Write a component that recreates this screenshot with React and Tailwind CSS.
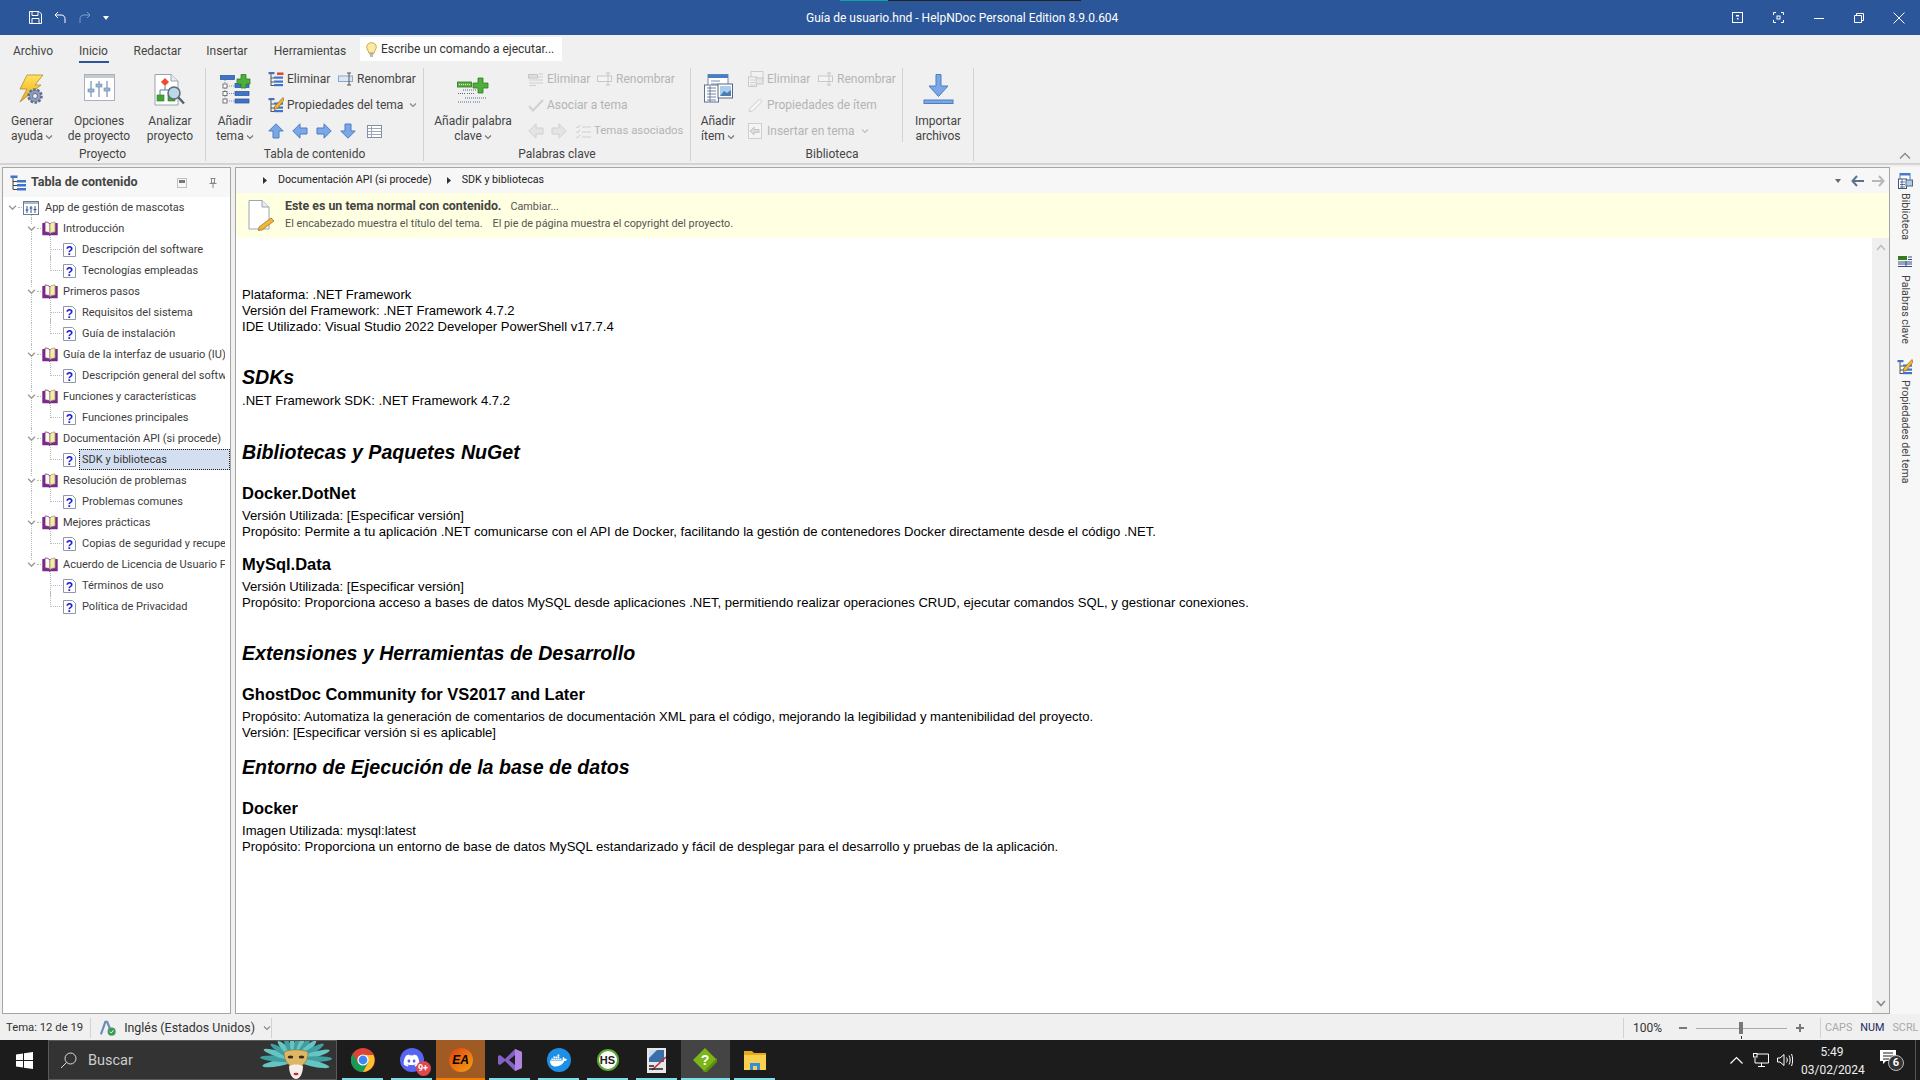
import { FaDiscord, FaDocker } from 'react-icons/fa';

const TREE = [
  { level: 0, label: 'App de gestión de mascotas' },
  { level: 1, label: 'Introducción' },
  { level: 2, label: 'Descripción del software' },
  { level: 2, label: 'Tecnologías empleadas', last: true },
  { level: 1, label: 'Primeros pasos' },
  { level: 2, label: 'Requisitos del sistema' },
  { level: 2, label: 'Guía de instalación', last: true },
  { level: 1, label: 'Guía de la interfaz de usuario (IU)' },
  { level: 2, label: 'Descripción general del software', last: true },
  { level: 1, label: 'Funciones y características' },
  { level: 2, label: 'Funciones principales', last: true },
  { level: 1, label: 'Documentación API (si procede)' },
  { level: 2, label: 'SDK y bibliotecas', last: true, selected: true },
  { level: 1, label: 'Resolución de problemas' },
  { level: 2, label: 'Problemas comunes', last: true },
  { level: 1, label: 'Mejores prácticas' },
  { level: 2, label: 'Copias de seguridad y recuperación', last: true },
  { level: 1, label: 'Acuerdo de Licencia de Usuario Final', lastBook: true },
  { level: 2, label: 'Términos de uso', inLast: true },
  { level: 2, label: 'Política de Privacidad', last: true, inLast: true },
];

function Chevron({ className = 'text-[#777]', size = 8 }) {
  return (
    <svg width={size} height={size} viewBox="0 0 8 8" className={className}>
      <path d="M1 2.5 4 5.5 7 2.5" fill="none" stroke="currentColor" strokeWidth="1.2" />
    </svg>
  );
}

function Arrow({ dir = 'up', disabled, size = 16 }) {
  const rot = { up: 0, right: 90, down: 180, left: 270 }[dir];
  return (
    <svg width={size} height={size} viewBox="0 0 16 16">
      <path
        transform={`rotate(${rot} 8 8)`}
        d="M8 .8 15.2 8H11v7H5V8H.8Z"
        fill={disabled ? '#e4e4e4' : '#7ba7e6'}
        stroke={disabled ? '#d0d0d0' : '#4a7fc4'}
      />
    </svg>
  );
}

function BoltGearIcon() {
  return (
    <svg width="26" height="31" viewBox="0 0 26 31">
      <defs>
        <linearGradient id="bolt" x1="0" y1="0" x2="0" y2="1">
          <stop offset="0" stopColor="#ffe35c" />
          <stop offset="1" stopColor="#f0a818" />
        </linearGradient>
      </defs>
      <path d="M8 1H24L16 11H22L1 28 8 15H1Z" fill="url(#bolt)" stroke="#b08a30" strokeWidth=".8" />
      <circle cx="16" cy="22" r="6.5" fill="#8d9db8" stroke="#5f6f8c" strokeWidth="2.5" strokeDasharray="2.5 1.5" />
      <circle cx="16" cy="22" r="2.5" fill="#f0f0f0" stroke="#5f6f8c" />
    </svg>
  );
}

function SlidersWindowIcon() {
  return (
    <svg width="31" height="27" viewBox="0 0 31 27">
      <rect x=".5" y=".5" width="30" height="26" fill="#fff" stroke="#a9b0bc" />
      <rect x="1" y="1" width="29" height="3" fill="#c4c9d2" />
      <g stroke="#8ba0bd" strokeWidth="1.4">
        <path d="M7 7V23M15 7V23M23 7V23" />
      </g>
      <g fill="#9db4d2" stroke="#6c86a8" strokeWidth=".6">
        <rect x="4" y="15" width="6" height="3" />
        <rect x="12" y="10" width="6" height="3" />
        <rect x="20" y="14" width="6" height="3" />
      </g>
    </svg>
  );
}

function AnalyzeIcon() {
  return (
    <svg width="32" height="33" viewBox="0 0 32 33">
      <path d="M1 .5H17L24 7V31H1Z" fill="#fff" stroke="#9aa3ad" />
      <path d="M17 .5V7H24" fill="#e8edf3" stroke="#9aa3ad" />
      <path d="M11 4 15 8 11 12 7 8Z" fill="#ef4b2b" />
      <path d="M11 12V16M6 21V16H16V21" fill="none" stroke="#5f7d9d" />
      <rect x="3" y="21" width="7" height="6" fill="#3fa535" stroke="#2a7a22" strokeWidth=".6" />
      <rect x="14" y="21" width="7" height="6" fill="#3fa535" stroke="#2a7a22" strokeWidth=".6" />
      <circle cx="20" cy="19" r="6" fill="#bcd6ea" stroke="#5d6a78" strokeWidth="1.5" />
      <path d="M24.5 23.5 30 29.5" stroke="#59606a" strokeWidth="2.4" />
    </svg>
  );
}

function AddTopicIcon() {
  return (
    <svg width="31" height="31" viewBox="0 0 31 31">
      <rect x=".5" y="1.5" width="14" height="4" fill="#3f74c8" stroke="#264f96" strokeWidth=".7" />
      <path d="M5 6V27M5 12H14M5 19.5H14M5 27H14" fill="none" stroke="#8a8a8a" strokeDasharray="1 1" />
      <g fill="#fff" stroke="#777">
        <rect x="3" y="10" width="4" height="4" />
        <rect x="3" y="17.5" width="4" height="4" />
        <rect x="3" y="25" width="4" height="4" />
      </g>
      <g fill="#3f74c8" stroke="#264f96" strokeWidth=".7">
        <rect x="15" y="9.5" width="14" height="4" />
        <rect x="15" y="17.5" width="14" height="4" />
        <rect x="15" y="25" width="14" height="4" />
      </g>
      <path d="M21 .5H26V5H30V10H26V14H21V10H17V5H21Z" fill="#4fae3c" stroke="#2c7d20" strokeWidth=".8" />
    </svg>
  );
}

function TocIcon({ variant }) {
  return (
    <svg width="16" height="16" viewBox="0 0 16 16">
      <rect x=".5" y="1" width="6" height="2.2" fill="#3f74c8" />
      <path d="M3 3V15M3 7H6M3 11H6M3 14.5H6" stroke="#555" fill="none" />
      <g fill="#3f74c8">
        <rect x="6" y="5.5" width="9" height="2.2" />
        <rect x="6" y="9.5" width="9" height="2.2" />
        <rect x="6" y="13" width="9" height="2.2" />
      </g>
      {variant === 'delete' && <rect x="9" y="1.5" width="6.5" height="2.4" fill="#e0402c" />}
      {variant === 'edit' && (
        <path d="M15 .5 7 9 6 12.5 9.5 11.5 16 3Z" fill="#f2b632" stroke="#8a5a1a" strokeWidth=".6" />
      )}
    </svg>
  );
}

function RenameIcon({ disabled }) {
  const c = disabled ? '#c4c4c4' : '#555';
  return (
    <svg width="16" height="14" viewBox="0 0 16 14">
      <rect x=".5" y="4" width="14" height="5.5" fill={disabled ? '#f4f4f4' : '#dce7f5'} stroke={disabled ? '#c8c8c8' : '#8aa6cf'} />
      <path d="M9 1H13M11 1V13M9 13H13" fill="none" stroke={c} />
    </svg>
  );
}

function GridListIcon() {
  return (
    <svg width="15" height="13" viewBox="0 0 15 13">
      <rect x=".5" y=".5" width="14" height="12" fill="#fff" stroke="#7f8ea3" />
      <path d="M.5 3.5H14.5M.5 6.5H14.5M.5 9.5H14.5M4.5 .5V12.5" stroke="#9aa7ba" fill="none" />
    </svg>
  );
}

function AddKeywordIcon() {
  return (
    <svg width="32" height="31" viewBox="0 0 32 31">
      <rect x=".5" y="8" width="14" height="5" fill="#5fae3e" stroke="#2d7520" strokeWidth=".8" />
      <path d="M2 10.5H13" stroke="#d5f0c8" strokeDasharray="1 1" />
      <path d="M21 4H26V9H31V14H26V19H21V14H16V9H21Z" fill="#4fae3c" stroke="#2c7d20" strokeWidth=".8" />
      <g stroke="#55698c" strokeDasharray="1 1" fill="none">
        <path d="M6 16H20M1 19.5H8M10 19.5H17M8 24H29M1 28H14M16 28H24" />
      </g>
    </svg>
  );
}

function KeywordSmallIcon() {
  return (
    <svg width="16" height="14" viewBox="0 0 16 14">
      <rect x=".5" y="2.5" width="9" height="3.5" fill="#dedede" stroke="#c6c6c6" />
      <path d="M11 2H15M10 5H15M1 8H15M1 11H15M1 13.5H8" stroke="#cfcfcf" />
    </svg>
  );
}

function CheckIcon() {
  return (
    <svg width="16" height="13" viewBox="0 0 16 13">
      <path d="M1 7 5 11.5 15 1" fill="none" stroke="#d0d0d0" strokeWidth="2" />
    </svg>
  );
}

function CheckListIcon() {
  return (
    <svg width="16" height="15" viewBox="0 0 16 15">
      <path d="M1 2.5 2.5 4 5 1M1 7.5 2.5 9 5 6M1 12.5 2.5 14 5 11" fill="none" stroke="#c8c8c8" />
      <path d="M7 3H16M7 8H16M7 13H16" stroke="#cfcfcf" />
    </svg>
  );
}

function AddItemIcon() {
  return (
    <svg width="29" height="29" viewBox="0 0 29 29">
      <rect x="4" y=".5" width="20" height="18" fill="#fff" stroke="#7b8da8" />
      <rect x="4" y=".5" width="20" height="3.5" fill="#4a7cc7" />
      <path d="M7 7H16M7 10H14" stroke="#7b8da8" />
      <rect x=".5" y="11" width="14" height="17" fill="#fff" stroke="#5d6f8c" />
      <path d="M3 14H12M3 17H12M3 20H12M3 23H12M3 26H12M6 12V28" stroke="#4f6690" strokeWidth=".8" />
      <rect x="14" y="10" width="14.5" height="14" fill="#fff" stroke="#58677f" />
      <rect x="16" y="12" width="11" height="10" fill="#a9cdee" />
      <path d="M16 22 20 17 23 19 27 16V22Z" fill="#4f7cb0" />
    </svg>
  );
}

function ItemSmallIcon() {
  return (
    <svg width="16" height="16" viewBox="0 0 16 16">
      <rect x="3" y=".5" width="12" height="9" fill="#f2f2f2" stroke="#cccccc" />
      <rect x=".5" y="6" width="8" height="9.5" fill="#f5f5f5" stroke="#c8c8c8" />
      <rect x="8" y="7" width="7" height="6" fill="#e6e6e6" stroke="#c8c8c8" />
      <path d="M2 9H7M2 11.5H7M2 14H7" stroke="#cdcdcd" />
    </svg>
  );
}

function PencilIcon() {
  return (
    <svg width="15" height="15" viewBox="0 0 15 15">
      <path d="M11.5 1 14 3.5 4.5 13 1 14 2 10.5Z" fill="#f6f6f6" stroke="#cccccc" />
    </svg>
  );
}

function InsertIcon() {
  return (
    <svg width="14" height="16" viewBox="0 0 14 16">
      <rect x=".5" y=".5" width="13" height="15" fill="#f4f4f4" stroke="#cfcfcf" />
      <path d="M2 8 6 4V6.5H11V9.5H6V12Z" fill="#dcdcdc" stroke="#c4c4c4" />
    </svg>
  );
}

function ImportIcon() {
  return (
    <svg width="31" height="31" viewBox="0 0 31 31">
      <path d="M13 .5H18V12H25L15.5 22.5 6 12H13Z" fill="#7ba7e6" stroke="#4a7fc4" />
      <rect x="1" y="26" width="29" height="3.5" fill="#7ba7e6" stroke="#4a7fc4" />
    </svg>
  );
}

function BookIcon() {
  return (
    <svg width="16" height="15" viewBox="0 0 16 15">
      <path d="M1 2V13.5H7L8 14.5 9 13.5H15V2" fill="#7a2a8c" stroke="#7a2a8c" strokeWidth="1.4" />
      <path d="M3 1C5 1 7 1.6 8 3V12.5C7 11.5 5 11 3 11Z" fill="#fdfbe6" stroke="#7a2a8c" strokeWidth=".8" />
      <path d="M13 1C11 1 9 1.6 8 3V12.5C9 11.5 11 11 13 11Z" fill="#f7ecaa" stroke="#9c9a6a" strokeWidth=".8" />
    </svg>
  );
}

function HelpPageIcon() {
  return (
    <svg width="13" height="14" viewBox="0 0 13 14">
      <path d="M.5.5H9.5L12.5 3.5V13.5H.5Z" fill="#fff" stroke="#8d99a6" />
      <text x="6.5" y="11.5" textAnchor="middle" fontSize="12" fontWeight="700" fontFamily="Liberation Sans" fill="#1a1ae0">?</text>
    </svg>
  );
}

function ProjectIcon() {
  return (
    <svg width="16" height="14" viewBox="0 0 16 14">
      <rect x=".5" y=".5" width="15" height="13" fill="#fff" stroke="#6b7d94" />
      <rect x="1" y="1" width="14" height="2" fill="#aeb9c8" />
      <path d="M4 5V12M8 5V12M12 5V12" stroke="#27558f" />
      <path d="M2.5 9H5.5M6.5 7H9.5M10.5 8.5H13.5" stroke="#27558f" />
    </svg>
  );
}

function TreeRow({ row }) {
  const left = { 0: 'pl-[20px]', 1: 'pl-[39px]', 2: 'pl-[60px]' }[row.level];
  return (
    <div className={`relative h-[21px] flex items-center whitespace-nowrap ${left} ${row.selected ? '' : 'pr-[4px]'}`}>
      {row.level === 0 && (
        <>
          <span className="absolute left-[5px] top-[6px]"><Chevron size={9} className="text-[#999]" /></span>
          <span className="absolute left-[15px] top-[10px] w-[4px] border-t border-dotted border-[#bbb]" />
          <span className="absolute left-[28px] top-[14px] h-[7px] border-l border-dotted border-[#bbb]" />
        </>
      )}
      {row.level === 1 && (
        <>
          {!row.lastBook && <span className="absolute left-[28px] top-[14px] h-[7px] border-l border-dotted border-[#bbb]" />}
          <span className="absolute left-[28px] top-0 h-[6px] border-l border-dotted border-[#bbb]" />
          <span className="absolute left-[24px] top-[6px]"><Chevron size={9} className="text-[#999]" /></span>
          <span className="absolute left-[34px] top-[10px] w-[4px] border-t border-dotted border-[#bbb]" />
        </>
      )}
      {row.level === 2 && (
        <>
          {!row.inLast && <span className="absolute left-[28px] top-0 h-[21px] border-l border-dotted border-[#bbb]" />}
          <span className={`absolute left-[47px] -top-[4px] border-l border-dotted border-[#bbb] ${row.last ? 'h-[15px]' : 'h-[25px]'}`} />
          <span className="absolute left-[47px] top-[10px] w-[12px] border-t border-dotted border-[#bbb]" />
        </>
      )}
      <span className="relative flex items-center shrink-0">
        {row.level === 0 && <ProjectIcon />}
        {row.level === 1 && <BookIcon />}
        {row.level === 2 && <HelpPageIcon />}
      </span>
      <span
        className={`pl-[2px] h-[21px] leading-[20px] overflow-hidden text-[#3c3c3c] ${row.level === 1 ? 'ml-[2px]' : 'ml-[3px]'} ${row.selected ? 'w-[151px] shrink-0 bg-[#d3dff0] border border-dotted border-[#222] text-[#333]' : 'flex-1 min-w-0 border border-transparent'}`}
      >
        {row.label}
      </span>
    </div>
  );
}

function LargeButton({ width, icon, lines, caret }) {
  return (
    <div className={`shrink-0 flex flex-col items-center ${width}`}>
      <div className="h-[46px] pt-[6px] flex items-start justify-center">{icon}</div>
      <div className="leading-[15px] text-center text-[#444] whitespace-nowrap">
        <div>{lines[0]}</div>
        <div className="flex items-center justify-center gap-[2px]">
          {lines[1]}
          {caret && <Chevron />}
        </div>
      </div>
    </div>
  );
}

function SmallAction({ icon, label, disabled, width, caret }) {
  return (
    <div className={`h-[22px] flex items-center whitespace-nowrap ${width} ${disabled ? 'text-[#b4b4b4]' : 'text-[#444]'}`}>
      <span className="w-[19px] shrink-0 flex items-center">{icon}</span>
      <span>{label}</span>
      {caret && <span className="ml-[6px]"><Chevron className={disabled ? 'text-[#c0c0c0]' : 'text-[#888]'} /></span>}
    </div>
  );
}

function RibbonGroup({ width, label, children }) {
  return (
    <div className={`shrink-0 h-[93px] flex flex-col border-r border-[#d2d2d2] ${width}`}>
      <div className="h-[79px] flex">{children}</div>
      <div className="h-[14px] leading-[14px] text-center text-[#444]">{label}</div>
    </div>
  );
}

function Ribbon() {
  return (
    <div className="h-[102px] shrink-0 bg-[#f0f0f0] border-b-2 border-[#d4d4d4] pt-[5px] flex text-[12px] relative">
      <RibbonGroup width="w-[206px]" label="Proyecto">
        <div className="pl-[6px] flex">
          <LargeButton width="w-[52px]" icon={<BoltGearIcon />} lines={['Generar', 'ayuda']} caret />
          <LargeButton width="w-[78px] ml-[2px]" icon={<SlidersWindowIcon />} lines={['Opciones', 'de proyecto']} />
          <LargeButton width="w-[62px] ml-[1px]" icon={<AnalyzeIcon />} lines={['Analizar', 'proyecto']} />
        </div>
      </RibbonGroup>
      <RibbonGroup width="w-[218px]" label="Tabla de contenido">
        <div className="pl-[4px] flex">
          <LargeButton width="w-[50px]" icon={<AddTopicIcon />} lines={['Añadir', 'tema']} caret />
          <div className="ml-[8px] flex flex-col gap-[4px]">
            <div className="flex">
              <SmallAction width="w-[70px]" icon={<TocIcon variant="delete" />} label="Eliminar" />
              <SmallAction icon={<RenameIcon />} label="Renombrar" />
            </div>
            <SmallAction icon={<TocIcon variant="edit" />} label="Propiedades del tema" caret />
            <div className="h-[22px] flex items-center gap-[8px]">
              <Arrow dir="up" />
              <Arrow dir="left" />
              <Arrow dir="right" />
              <Arrow dir="down" />
              <span className="ml-[3px]"><GridListIcon /></span>
            </div>
          </div>
        </div>
      </RibbonGroup>
      <RibbonGroup width="w-[267px]" label="Palabras clave">
        <div className="pl-[9px] flex">
          <LargeButton width="w-[80px]" icon={<AddKeywordIcon />} lines={['Añadir palabra', 'clave']} caret />
          <div className="ml-[15px] flex flex-col gap-[4px]">
            <div className="flex">
              <SmallAction width="w-[69px]" disabled icon={<KeywordSmallIcon />} label="Eliminar" />
              <SmallAction disabled icon={<RenameIcon disabled />} label="Renombrar" />
            </div>
            <SmallAction disabled icon={<CheckIcon />} label="Asociar a tema" />
            <div className="h-[22px] flex items-center text-[#b4b4b4] text-[11.4px] whitespace-nowrap">
              <Arrow dir="left" disabled />
              <span className="ml-[7px]"><Arrow dir="right" disabled /></span>
              <span className="ml-[8px] mr-[3px]"><CheckListIcon /></span>
              Temas asociados
            </div>
          </div>
        </div>
      </RibbonGroup>
      <RibbonGroup width="w-[283px]" label="Biblioteca">
        <div className="pl-[5px] flex">
          <LargeButton width="w-[44px]" icon={<AddItemIcon />} lines={['Añadir', 'ítem']} caret />
          <div className="ml-[8px] w-[155px] h-[74px] border-r border-[#d2d2d2] flex flex-col gap-[4px]">
            <div className="flex">
              <SmallAction width="w-[70px]" disabled icon={<ItemSmallIcon />} label="Eliminar" />
              <SmallAction disabled icon={<RenameIcon disabled />} label="Renombrar" />
            </div>
            <SmallAction disabled icon={<PencilIcon />} label="Propiedades de ítem" />
            <SmallAction disabled icon={<InsertIcon />} label="Insertar en tema" caret />
          </div>
          <LargeButton width="w-[60px] ml-[5px]" icon={<ImportIcon />} lines={['Importar', 'archivos']} />
        </div>
      </RibbonGroup>
      <span className="absolute right-[9px] bottom-[3px]">
        <svg width="12" height="8" viewBox="0 0 12 8"><path d="M1 6.5 6 1.5 11 6.5" fill="none" stroke="#888" strokeWidth="1.3" /></svg>
      </span>
    </div>
  );
}

function TitleBar() {
  return (
    <div className="relative h-[35px] shrink-0 bg-[#2b579a] flex items-center text-white text-[12px]">
      <span className="absolute left-[840px] top-0 w-[48px] h-[1px] bg-[#0aa5a5]" />
      <span className="absolute left-[888px] top-0 w-[193px] h-[1px] bg-[#222]" />
      <div className="w-[806px] pl-[29px] flex items-center shrink-0">
        <svg width="13" height="13" viewBox="0 0 13 13"><path d="M.5.5H10L12.5 3V12.5H.5ZM3 .5V4.5H9V.5M3 12.5V7.5H10V12.5" fill="none" stroke="#fff" /></svg>
        <svg className="ml-[12px]" width="12" height="13" viewBox="0 0 12 13"><path d="M4 1 1 4 4 7M1 4H7C10 4 11 6 11 8V12" fill="none" stroke="#fff" /></svg>
        <svg className="ml-[13px]" width="12" height="13" viewBox="0 0 12 13"><path d="M8 1 11 4 8 7M11 4H5C2 4 1 6 1 8V12" fill="none" stroke="#7f9cc6" /></svg>
        <svg className="ml-[12px]" width="6" height="4" viewBox="0 0 6 4"><path d="M0 0H6L3 4Z" fill="#fff" /></svg>
      </div>
      <div className="flex-1 whitespace-nowrap">Guía de usuario.hnd - HelpNDoc Personal Edition 8.9.0.604</div>
      <div className="flex items-center shrink-0">
        <svg width="11" height="11" viewBox="0 0 11 11"><rect x=".5" y=".5" width="10" height="10" fill="none" stroke="#fff" /><rect x="4" y="3" width="3" height="1.5" fill="#fff" /><rect x="5" y="6" width="1.5" height="1.5" fill="#fff" /></svg>
        <svg className="ml-[30px]" width="11" height="11" viewBox="0 0 11 11"><path d="M.5 3V.5H3M8 .5H10.5V3M10.5 8V10.5H8M3 10.5H.5V8" fill="none" stroke="#fff" /><rect x="4" y="4" width="3" height="3" fill="none" stroke="#fff" /></svg>
        <svg className="ml-[30px]" width="10" height="10" viewBox="0 0 10 10"><path d="M0 5.5H10" stroke="#fff" /></svg>
        <svg className="ml-[30px]" width="10" height="10" viewBox="0 0 10 10"><path d="M2.5 2.5V.5H9.5V7.5H7.5M.5 2.5H7.5V9.5H.5Z" fill="none" stroke="#fff" /></svg>
        <svg className="ml-[29px] mr-[15px]" width="12" height="12" viewBox="0 0 12 12"><path d="M.5.5 11.5 11.5M11.5.5.5 11.5" stroke="#fff" /></svg>
      </div>
    </div>
  );
}

function Tabs() {
  const tabs = [
    ['Archivo', 'w-[66px]'],
    ['Inicio', 'w-[55px]'],
    ['Redactar', 'w-[73px]'],
    ['Insertar', 'w-[66px]'],
    ['Herramientas', 'w-[100px]'],
  ];
  return (
    <div className="h-[28px] shrink-0 bg-[#f0f0f0] flex text-[12px] text-[#444]">
      {tabs.map(([name, w]) => (
        <div key={name} className={`relative text-center leading-[32px] ${w}`}>
          {name}
          {name === 'Inicio' && <span className="absolute left-[13px] right-[12px] bottom-0 h-[2px] bg-[#2b579a]" />}
        </div>
      ))}
      <div className="mt-[2px] h-[24px] w-[202px] bg-white flex items-center pl-[6px] text-[#333] whitespace-nowrap">
        <svg className="mr-[4px]" width="11" height="15" viewBox="0 0 11 15">
          <path d="M5.5.7C2.7.7.7 2.7.7 5.2c0 2.2 1.9 3.2 2.1 5.8h5.4c.2-2.6 2.1-3.6 2.1-5.8C10.3 2.7 8.3.7 5.5.7Z" fill="#fbe9a6" stroke="#d4a63c" />
          <path d="M3.5 12H7.5M4 14H7" stroke="#777" />
        </svg>
        Escribe un comando a ejecutar...
      </div>
    </div>
  );
}

function TreePanel() {
  return (
    <div className="w-[229px] shrink-0 border border-[#a5a5a5] bg-white flex flex-col text-[11px]">
      <div className="h-[29px] shrink-0 bg-[#f7f7f7] flex items-center pl-[7px] pr-[13px]">
        <svg width="17" height="16" viewBox="0 0 17 16">
          <rect x=".5" y=".5" width="7" height="2.5" fill="#3f74c8" />
          <path d="M3 3V14.5M3 6.5H7M3 10.5H7M3 14.5H7" stroke="#444" fill="none" />
          <g fill="#3f74c8"><rect x="7" y="5" width="9" height="2.5" /><rect x="7" y="9" width="9" height="2.5" /><rect x="7" y="13" width="9" height="2.5" /></g>
        </svg>
        <span className="ml-[4px] text-[12.5px] font-bold text-[#444] whitespace-nowrap">Tabla de contenido</span>
        <svg className="ml-auto" width="10" height="10" viewBox="0 0 10 10"><rect x=".5" y=".5" width="9" height="9" fill="none" stroke="#888" strokeDasharray="1 1" /><rect x="2" y="2" width="6" height="3" fill="#777" /></svg>
        <svg className="ml-[22px]" width="8" height="10" viewBox="0 0 8 10"><path d="M1.5.5H6.5M2.5.5V5H5.5V.5M.5 5.5H7.5M4 5.5V10" fill="none" stroke="#888" /></svg>
      </div>
      <div className="w-[227px] relative flex-1">
        {TREE.map((row) => <TreeRow key={row.label} row={row} />)}
      </div>
    </div>
  );
}

function ArticleHeading({ children, className }) {
  return <h2 className={`text-[19.6px] leading-[23px] font-bold italic text-black ${className}`}>{children}</h2>;
}

function ArticleSub({ children, className }) {
  return <h3 className={`text-[16.5px] leading-[18px] font-bold text-black ${className}`}>{children}</h3>;
}

function Article() {
  return (
    <div className="flex-1 pl-[6px] pt-[49px] text-[13.1px] leading-[16px] text-black whitespace-nowrap overflow-hidden font-['Liberation_Sans',sans-serif]">
      <p>Plataforma: .NET Framework</p>
      <p>Versión del Framework: .NET Framework 4.7.2</p>
      <p>IDE Utilizado: Visual Studio 2022 Developer PowerShell v17.7.4</p>
      <ArticleHeading className="mt-[31px]">SDKs</ArticleHeading>
      <p className="mt-[4px]">.NET Framework SDK: .NET Framework 4.7.2</p>
      <ArticleHeading className="mt-[32px]">Bibliotecas y Paquetes NuGet</ArticleHeading>
      <ArticleSub className="mt-[20px]">Docker.DotNet</ArticleSub>
      <p className="mt-[6px]">Versión Utilizada: [Especificar versión]</p>
      <p>Propósito: Permite a tu aplicación .NET comunicarse con el API de Docker, facilitando la gestión de contenedores Docker directamente desde el código .NET.</p>
      <ArticleSub className="mt-[15px]">MySql.Data</ArticleSub>
      <p className="mt-[6px]">Versión Utilizada: [Especificar versión]</p>
      <p>Propósito: Proporciona acceso a bases de datos MySQL desde aplicaciones .NET, permitiendo realizar operaciones CRUD, ejecutar comandos SQL, y gestionar conexiones.</p>
      <ArticleHeading className="mt-[31px]">Extensiones y Herramientas de Desarrollo</ArticleHeading>
      <ArticleSub className="mt-[20px]">GhostDoc Community for VS2017 and Later</ArticleSub>
      <p className="mt-[6px]">Propósito: Automatiza la generación de comentarios de documentación XML para el código, mejorando la legibilidad y mantenibilidad del proyecto.</p>
      <p>Versión: [Especificar versión si es aplicable]</p>
      <ArticleHeading className="mt-[15px]">Entorno de Ejecución de la base de datos</ArticleHeading>
      <ArticleSub className="mt-[20px]">Docker</ArticleSub>
      <p className="mt-[6px]">Imagen Utilizada: mysql:latest</p>
      <p>Propósito: Proporciona un entorno de base de datos MySQL estandarizado y fácil de desplegar para el desarrollo y pruebas de la aplicación.</p>
    </div>
  );
}

function ContentPanel() {
  return (
    <div className="flex-1 ml-[4px] border border-[#a5a5a5] bg-white flex flex-col min-w-0 text-[12px]">
      <div className="h-[25px] shrink-0 bg-[#f7f7f7] flex items-center pl-[27px] pr-[4px] text-[#222] text-[10.7px]">
        <svg width="4" height="7" viewBox="0 0 4 7"><path d="M0 0 4 3.5 0 7Z" fill="#333" /></svg>
        <span className="ml-[11px]">Documentación API (si procede)</span>
        <svg className="ml-[15px]" width="4" height="7" viewBox="0 0 4 7"><path d="M0 0 4 3.5 0 7Z" fill="#333" /></svg>
        <span className="ml-[11px]">SDK y bibliotecas</span>
        <svg className="ml-auto" width="6" height="4" viewBox="0 0 6 4"><path d="M0 0H6L3 4Z" fill="#666" /></svg>
        <svg className="ml-[10px]" width="13" height="12" viewBox="0 0 13 12"><path d="M6 1 1.5 6 6 11M2 6H13" fill="none" stroke="#5b7390" strokeWidth="2" /></svg>
        <svg className="ml-[8px]" width="13" height="12" viewBox="0 0 13 12"><path d="M7 1 11.5 6 7 11M11 6H0" fill="none" stroke="#b8b8b8" strokeWidth="2" /></svg>
      </div>
      <div className="h-[45px] shrink-0 bg-[#ffffe1] flex pl-[12px] pt-[7px]">
        <svg width="27" height="31" viewBox="0 0 27 31">
          <path d="M1 .5H14L21 7V29H1Z" fill="#fff" stroke="#9ba6b4" />
          <path d="M14 .5V7H21" fill="#e8edf3" stroke="#9ba6b4" />
          <path d="M23 18 26 21 14 30 10.5 30.5 11 27Z" fill="#f2b632" stroke="#8f6a2a" strokeWidth=".7" />
        </svg>
        <div className="ml-[10px] -mt-[3px] text-[#555] whitespace-nowrap leading-[17px] text-[10.8px]">
          <div><span className="text-[12.4px] font-bold text-[#444]">Este es un tema normal con contenido.</span><span className="ml-[9px]">Cambiar...</span></div>
          <div>El encabezado muestra el título del tema.<span className="ml-[10px]">El pie de página muestra el copyright del proyecto.</span></div>
        </div>
      </div>
      <div className="flex-1 flex min-h-0">
        <Article />
        <div className="w-[17px] shrink-0 bg-[#f0f0f0] flex flex-col justify-between items-center py-[6px]">
          <svg width="10" height="7" viewBox="0 0 10 7"><path d="M1 6 5 1.5 9 6" fill="none" stroke="#c0c0c0" strokeWidth="1.6" /></svg>
          <svg width="10" height="7" viewBox="0 0 10 7"><path d="M1 1 5 5.5 9 1" fill="none" stroke="#888" strokeWidth="1.6" /></svg>
        </div>
      </div>
    </div>
  );
}

function ItemSideIcon() {
  return (
    <svg width="15" height="16" viewBox="0 0 15 16">
      <rect x="2" y=".5" width="10" height="9" fill="#fff" stroke="#4a7cc7" />
      <rect x="2" y=".5" width="10" height="2" fill="#4a7cc7" />
      <rect x=".5" y="6" width="8" height="9.5" fill="#fff" stroke="#3c5680" />
      <path d="M2 9H7M2 11.5H7M2 14H7M4 6V15" stroke="#3c5680" strokeWidth=".8" />
      <rect x="8" y="7" width="6.5" height="6" fill="#a9cdee" stroke="#58677f" />
    </svg>
  );
}

function SideBar() {
  return (
    <div className="w-[30px] shrink-0 bg-[#f7f7f7] flex flex-col items-center pt-[6px] text-[10.7px] leading-[14px] text-[#444] whitespace-nowrap">
      <ItemSideIcon />
      <span className="mt-[4px] [writing-mode:vertical-rl]">Biblioteca</span>
      <svg className="mt-[16px] shrink-0" width="14" height="11" viewBox="0 0 14 11"><rect width="9" height="4" fill="#3a7a1e" /><path d="M10 1H14M10 3.5H14M0 6H14M0 8H14M0 10.5H14M8 5V11" stroke="#2f4f8c" /></svg>
      <span className="mt-[8px] [writing-mode:vertical-rl]">Palabras clave</span>
      <span className="mt-[15px]"><TocIcon variant="edit" /></span>
      <span className="mt-[5px] [writing-mode:vertical-rl]">Propiedades del tema</span>
    </div>
  );
}

function StatusBar() {
  return (
    <div className="h-[24px] shrink-0 bg-[#f0f0f0] flex items-center text-[12px] text-[#333] whitespace-nowrap">
      <div className="w-[91px] h-[20px] leading-[20px] pl-[6px] text-[11.3px] border-r border-[#d2d2d2]">Tema: 12 de 19</div>
      <div className="w-[181px] h-[20px] flex items-center pl-[9px] border-r border-[#d2d2d2]">
        <svg width="18" height="17" viewBox="0 0 18 17">
          <path d="M1 15 6 1H8L12 11" fill="none" stroke="#6b8db5" strokeWidth="2.4" />
          <circle cx="13" cy="12" r="4.5" fill="#3f9a5c" />
          <path d="M11 12 12.5 13.5 15 10.5" fill="none" stroke="#fff" />
        </svg>
        <span className="ml-[8px] text-[12.4px]">Inglés (Estados Unidos)</span>
        <span className="ml-[8px]"><Chevron className="text-[#888]" /></span>
      </div>
      <div className="ml-auto w-[197px] h-[20px] flex items-center pl-[9px] border-l border-[#d2d2d2]">
        100%
        <span className="ml-[17px] w-[8px] h-[2px] bg-[#777]" />
        <span className="ml-[9px] relative w-[91px] h-[1px] bg-[#aaa]">
          <span className="absolute left-[43px] -top-[6px] w-[4px] h-[12px] bg-[#777]" />
          <span className="absolute left-[45px] top-[8px] w-[1px] h-[3px] bg-[#333]" />
        </span>
        <svg className="ml-[9px]" width="8" height="8" viewBox="0 0 8 8"><path d="M4 0V8M0 4H8" stroke="#777" strokeWidth="2" /></svg>
      </div>
      <div className="w-[100px] h-[20px] flex items-center pl-[4px] border-l border-[#d2d2d2] text-[#a8a8a8] text-[10.8px]">
        CAPS
        <span className="ml-[8px] text-[#1c2a5e]">NUM</span>
        <span className="ml-[8px]">SCRL</span>
      </div>
    </div>
  );
}

function MaskLogo() {
  const feathers = [
    [-100, 34], [-86, 36], [-72, 34], [-58, 30], [-44, 26], [-28, 24], [-12, 22], [4, 22],
    [18, 24], [32, 26], [46, 28], [60, 32], [74, 35], [88, 36], [102, 34],
  ];
  return (
    <svg width="72" height="40" viewBox="0 0 72 40">
      {feathers.map(([a, len], i) => (
        <ellipse
          key={a}
          cx="36"
          cy={20 - len / 2}
          rx="3"
          ry={len / 2}
          fill={i % 2 ? '#3f9ea2' : '#66c4c2'}
          transform={`rotate(${a} 36 20)`}
        />
      ))}
      <path d="M24 12C30 9 42 9 48 12 48 21 44 26 36 28 28 26 24 21 24 12Z" fill="#dcb765" stroke="#8d6a2a" strokeWidth=".6" />
      <ellipse cx="30.5" cy="17" rx="2.8" ry="1.6" fill="#3a2a14" />
      <ellipse cx="41.5" cy="17" rx="2.8" ry="1.6" fill="#3a2a14" />
      <path d="M29 26C32 24 40 24 43 26 43 33 40 39 36 39 32 39 29 33 29 26Z" fill="#f4efe9" />
      <ellipse cx="36" cy="34" rx="2.5" ry="1.2" fill="#c2263a" />
    </svg>
  );
}

function TaskIcon({ children, state }) {
  const bg = state === 'orange' ? 'bg-[#a05a24]' : state === 'active' ? 'bg-[#444]' : '';
  const bar = state === 'orange' ? 'left-0 right-0 bg-[#f57c00]' : state === 'active' ? 'left-0 right-0 bg-[#7fdfe8]' : 'left-[4px] right-[4px] bg-[#7fdfe8]';
  return (
    <div className={`relative w-[49px] h-[40px] shrink-0 flex items-center justify-center ${bg}`}>
      {children}
      <span className={`absolute bottom-0 h-[2px] ${bar}`} />
    </div>
  );
}

function Taskbar() {
  return (
    <div className="h-[40px] shrink-0 bg-[#1c1c1c] flex items-center text-white whitespace-nowrap">
      <div className="w-[48px] h-[40px] flex items-center justify-center">
        <svg width="17" height="17" viewBox="0 0 17 17"><path d="M0 2.4 7 1.4V8H0ZM8 1.2 17 0V8H8ZM0 9H7V15.6L0 14.6ZM8 9H17V17L8 15.8Z" fill="#fff" /></svg>
      </div>
      <div className="w-[289px] h-[40px] bg-[#333] border border-[#5a5a5a] flex items-center pl-[11px] text-[14.5px] text-[#ccc] overflow-hidden">
        <svg width="17" height="17" viewBox="0 0 17 17"><circle cx="10.5" cy="6.5" r="5.5" fill="none" stroke="#ddd" /><path d="M6.5 10.5 1 16" stroke="#ddd" /></svg>
        <span className="ml-[11px] pt-[2px]">Buscar</span>
        <span className="ml-auto mr-[4px]"><MaskLogo /></span>
      </div>
      <div className="flex pl-[1px]">
        <TaskIcon state="open">
          <svg width="24" height="24" viewBox="0 0 24 24">
            <circle cx="12" cy="12" r="12" fill="#db4437" />
            <path d="M12 12 1.6 18A12 12 0 0 0 12 24L17.5 14Z" fill="#0f9d58" />
            <path d="M1.6 18A12 12 0 0 1 1.6 6L7 14Z" fill="#0f9d58" />
            <path d="M12 7H22.4A12 12 0 0 1 12 24L17.5 14Z" fill="#fbc02d" />
            <circle cx="12" cy="12" r="5.6" fill="#fff" />
            <circle cx="12" cy="12" r="4.4" fill="#4285f4" />
          </svg>
        </TaskIcon>
        <TaskIcon state="open">
          <span className="relative w-[24px] h-[24px] rounded-full bg-[#5865f2] flex items-center justify-center">
            <FaDiscord size={17} color="#fff" />
            <span className="absolute -right-[7px] -bottom-[4px] w-[15px] h-[15px] rounded-full bg-[#e0484f] text-[9px] leading-[15px] text-center text-white font-bold">9+</span>
          </span>
        </TaskIcon>
        <TaskIcon state="orange">
          <span className="w-[24px] h-[24px] rounded-full bg-gradient-to-br from-[#e03a10] to-[#f5a010] flex items-center justify-center text-[12px] font-bold italic text-black font-['Liberation_Sans',sans-serif]">EA</span>
        </TaskIcon>
        <TaskIcon state="open">
          <svg width="24" height="24" viewBox="0 0 24 24">
            <path d="M17 1 24 4V20L17 23 7 13 2 17 0 16V8L2 7 7 11Z" fill="#8661c5" />
            <path d="M17 1 24 4V20L17 23Z" fill="#b084e0" />
            <path d="M17 7V17L11 12Z" fill="#1c1c1c" />
          </svg>
        </TaskIcon>
        <TaskIcon state="open">
          <span className="w-[24px] h-[24px] rounded-full bg-[#1d8fe6] flex items-center justify-center">
            <FaDocker size={17} color="#fff" />
          </span>
        </TaskIcon>
        <TaskIcon state="open">
          <span className="w-[22px] h-[22px] rounded-full bg-white border-[2px] border-[#5fa832] flex items-center justify-center text-[11px] font-bold text-[#222] font-['Liberation_Sans',sans-serif]">HS</span>
        </TaskIcon>
        <TaskIcon state="open">
          <svg width="19" height="25" viewBox="0 0 19 25">
            <rect width="19" height="25" fill="#e8e8e8" />
            <rect x="2" y="2" width="15" height="12" fill="#3b6ea8" />
            <path d="M2 2H10L2 10Z" fill="#c8dbef" />
            <path d="M19 9 5 22" stroke="#c2263a" strokeWidth="1.5" />
            <path d="M2 21H16M2 18H7" stroke="#222" strokeWidth="1.4" />
          </svg>
        </TaskIcon>
        <TaskIcon state="active">
          <svg width="25" height="25" viewBox="0 0 25 25">
            <path d="M12 0 24 12 12 24 0 12Z" fill="#7cb518" />
            <path d="M24 14 14 24H10L24 10Z" fill="#5a8f10" />
            <text x="12" y="17" textAnchor="middle" fontSize="14" fontWeight="700" fontFamily="Liberation Sans" fill="#fff">?</text>
          </svg>
        </TaskIcon>
        <TaskIcon state="open">
          <svg width="22" height="20" viewBox="0 0 22 20">
            <path d="M0 1H8L10 3H22V18H0Z" fill="#e8a91d" />
            <rect y="5" width="22" height="15" fill="#fbd04f" />
            <path d="M6 20V13H16V20H13V16H9V20Z" fill="#2f8fe0" />
          </svg>
        </TaskIcon>
      </div>
      <div className="ml-auto flex items-center h-[40px]">
        <svg width="13" height="8" viewBox="0 0 13 8"><path d="M.5 7.5 6.5 1.5 12.5 7.5" fill="none" stroke="#fff" strokeWidth="1.2" /></svg>
        <svg className="ml-[10px]" width="16" height="14" viewBox="0 0 16 14"><path d="M4 1H15.5V10H2V5M8.5 10V13M5 13.5H12" fill="none" stroke="#fff" /><rect x=".5" y=".5" width="3.5" height="3.5" fill="none" stroke="#fff" /></svg>
        <svg className="ml-[8px]" width="16" height="14" viewBox="0 0 16 14"><path d="M.5 5H3L7 1.5V12.5L3 9H.5ZM9.5 4.5C10.5 6 10.5 8 9.5 9.5M12 2.5C13.5 5 13.5 9 12 11.5M14.5 1C16 4 16 10 14.5 13" fill="none" stroke="#fff" /></svg>
        <div className="ml-[8px] w-[62px] pt-[1px] text-center text-[12px] leading-[18px] text-[#eee]">
          <div>5:49</div>
          <div>03/02/2024</div>
        </div>
        <div className="relative ml-[17px] w-[17px] h-[20px]">
          <svg width="16" height="15" viewBox="0 0 16 15"><path d="M0 0H16V11H6L3 14V11H0Z" fill="#fff" /><path d="M3 3H13M3 6H13M3 9H9" stroke="#1c1c1c" /></svg>
          <span className="absolute -right-[7px] top-[5px] w-[16px] h-[16px] rounded-full bg-[#333] border border-[#bbb] text-[11px] leading-[14px] text-center font-bold">6</span>
        </div>
        <div className="ml-[18px] w-[5px] h-[40px] border-l border-[#555]" />
      </div>
    </div>
  );
}

export default function App() {
  return (
    <div className="w-[1920px] h-[1080px] flex flex-col overflow-hidden bg-[#f0f0f0] font-['Roboto','Liberation_Sans',sans-serif]">
      <TitleBar />
      <Tabs />
      <Ribbon />
      <div className="h-[851px] shrink-0 flex pl-[2px] pt-[2px] pb-[2px]">
        <TreePanel />
        <ContentPanel />
        <SideBar />
      </div>
      <StatusBar />
      <Taskbar />
    </div>
  );
}
